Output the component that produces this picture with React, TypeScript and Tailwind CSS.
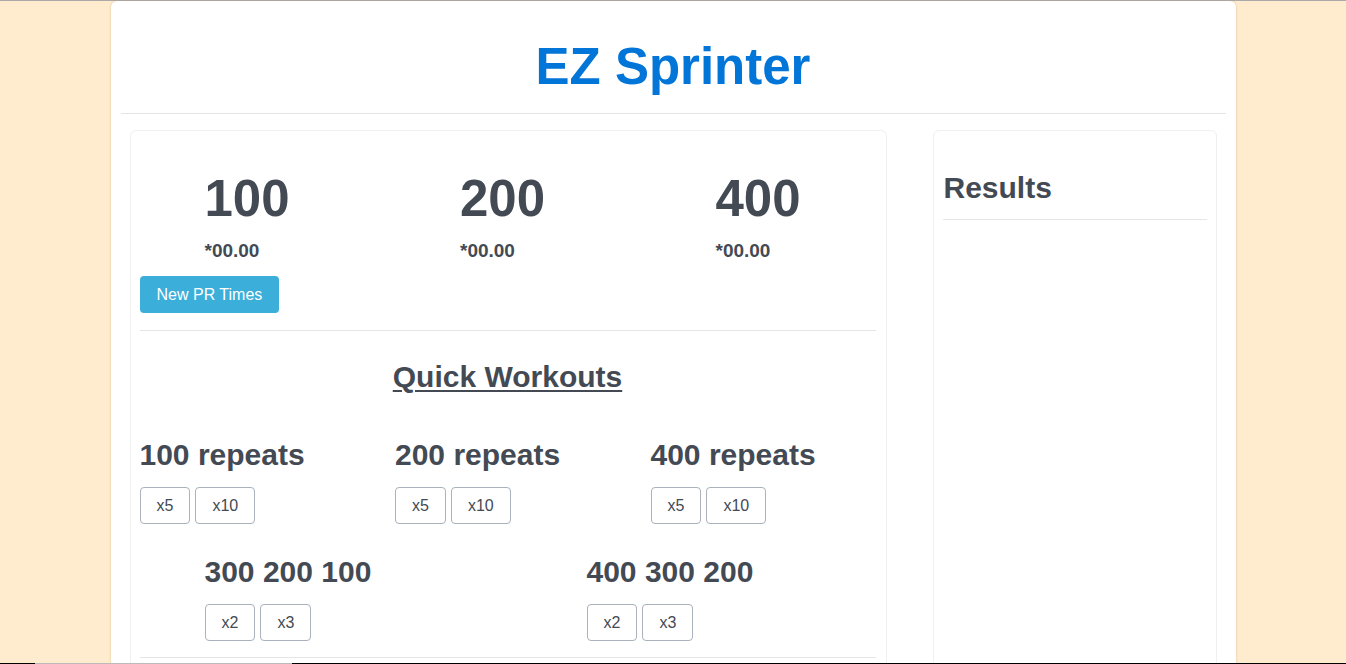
const prTimes = [
  { distance: "100", time: "*00.00" },
  { distance: "200", time: "*00.00" },
  { distance: "400", time: "*00.00" },
];

const repeats = [
  { title: "100 repeats", sets: ["x5", "x10"] },
  { title: "200 repeats", sets: ["x5", "x10"] },
  { title: "400 repeats", sets: ["x5", "x10"] },
];

const ladders = [
  { title: "300 200 100", sets: ["x2", "x3"] },
  { title: "400 300 200", sets: ["x2", "x3"] },
];

function SetButton({ label }: { label: string }) {
  return (
    <button className="bg-white border border-[#aab2bd] rounded-[4px] px-4 py-2 text-[16px] leading-[19px] text-[#434a54]">
      {label}
    </button>
  );
}

function Workout({ title, sets }: { title: string; sets: string[] }) {
  return (
    <div>
      <h2 className="text-[30px] leading-[36px] font-bold">{title}</h2>
      <div className="flex gap-[5px] mt-[14px]">
        {sets.map((s) => (
          <SetButton key={s} label={s} />
        ))}
      </div>
    </div>
  );
}

export default function App() {
  return (
    <div
      className="min-h-screen bg-[#ffebcd] border-t border-[#aaaaaa] text-[#434a54]"
      style={{ fontFamily: '"Liberation Sans", Arial, sans-serif' }}
    >
      <div className="w-[1125px] mx-auto bg-white rounded-t-md shadow-[0_0_2px_rgba(180,140,80,0.5)] px-[10px] pb-10 min-h-[700px]">
        {/* ── Header ── */}
        <h1 className="pt-[36px] text-center text-[51px] leading-[60px] font-bold text-[#0275d8]">
          EZ Sprinter
        </h1>
        <hr className="mt-[16px] border-t border-[#e5e5e5]" />

        <div className="flex mt-4 px-[9px] gap-[46px]">
          {/* ── Main panel ── */}
          <div className="w-[757px] border border-[#f0f0f0] rounded-md pl-[9px] pr-[10px] pb-20">
            <div className="grid grid-cols-[255.5px_255.5px_1fr] pt-[38px]">
              {prTimes.map(({ distance, time }) => (
                <div key={distance} className="pl-[65px]">
                  <div className="text-[51px] leading-[60px] font-bold">{distance}</div>
                  <div className="mt-[12px] text-[19px] leading-[20px] font-bold">{time}</div>
                </div>
              ))}
            </div>
            <button className="mt-[15px] bg-[#3bafda] text-white rounded-[4px] px-[17px] py-2 text-[16px] leading-[21px]">
              New PR Times
            </button>
            <hr className="mt-[17px] border-t border-[#e5e5e5]" />

            <h2 className="mt-[28px] text-center text-[30px] leading-[36px] font-bold underline underline-offset-[3px] decoration-2">
              Quick Workouts
            </h2>

            <div className="grid grid-cols-[255.5px_255.5px_1fr] mt-[42px]">
              {repeats.map((w) => (
                <Workout key={w.title} {...w} />
              ))}
            </div>

            <div className="grid grid-cols-[382px_1fr] mt-[30px]">
              {ladders.map((w) => (
                <div key={w.title} className="pl-[65px]">
                  <Workout {...w} />
                </div>
              ))}
            </div>
            <hr className="mt-[16px] border-t border-[#e5e5e5]" />
          </div>

          {/* ── Results ── */}
          <div className="w-[284px] border border-[#f0f0f0] rounded-md px-[9px] pb-20">
            <h2 className="mt-[39px] pl-px text-[30px] leading-[36px] font-bold">Results</h2>
            <hr className="mt-[13px] border-t border-[#e5e5e5]" />
          </div>
        </div>
      </div>

      {/* bottom edge strip */}
      <div className="fixed bottom-0 left-0 w-full h-px flex">
        <div className="w-[35px] bg-black" />
        <div className="w-[257px] bg-[#bbbbbb]" />
        <div className="flex-1 bg-black" />
      </div>
    </div>
  );
}
